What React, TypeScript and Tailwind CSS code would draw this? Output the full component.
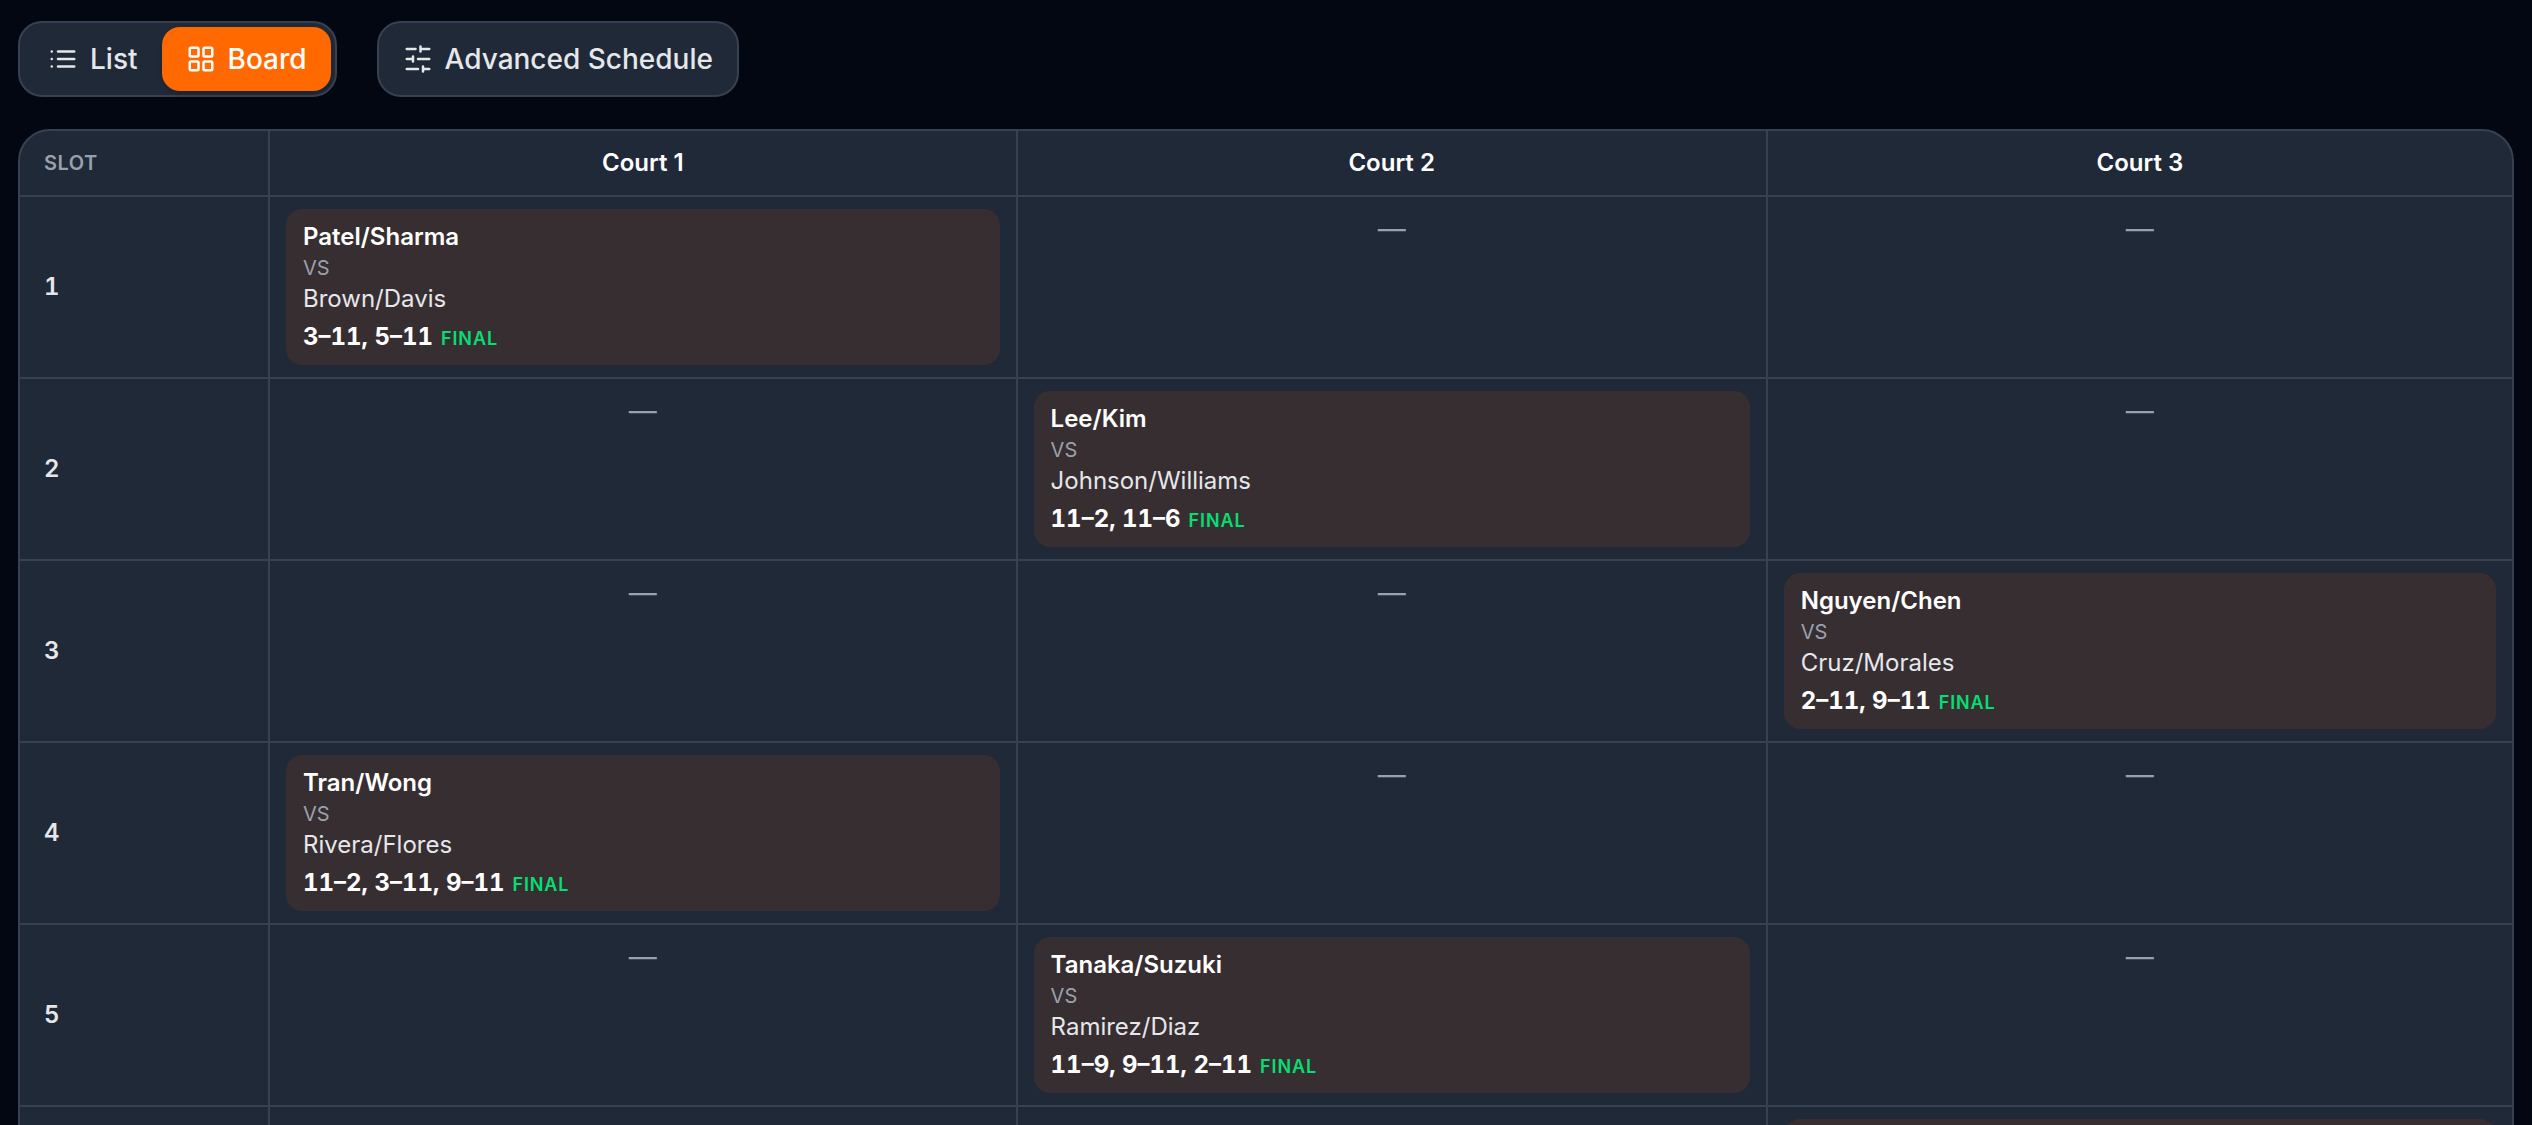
import type { ReactNode } from 'react';
import { useState } from 'react';

type Match = { court: number; home: string; away: string; score: string };

const courts = ['Court 1', 'Court 2', 'Court 3'];

const slots: Match[] = [
  { court: 0, home: 'Patel/Sharma', away: 'Brown/Davis', score: '3–11, 5–11' },
  { court: 1, home: 'Lee/Kim', away: 'Johnson/Williams', score: '11–2, 11–6' },
  { court: 2, home: 'Nguyen/Chen', away: 'Cruz/Morales', score: '2–11, 9–11' },
  { court: 0, home: 'Tran/Wong', away: 'Rivera/Flores', score: '11–2, 3–11, 9–11' },
  { court: 1, home: 'Tanaka/Suzuki', away: 'Ramirez/Diaz', score: '11–9, 9–11, 2–11' },
  { court: 2, home: '', away: '', score: '' },
];

function Icon({ children }: { children: ReactNode }) {
  return (
    <svg
      viewBox="0 0 24 24"
      className="size-[30px] shrink-0"
      fill="none"
      stroke="currentColor"
      strokeWidth="2"
      strokeLinecap="round"
      strokeLinejoin="round"
      aria-hidden="true"
    >
      {children}
    </svg>
  );
}

function ListIcon() {
  return (
    <Icon>
      <path d="M8 6h13M8 12h13M8 18h13M3 6h.01M3 12h.01M3 18h.01" />
    </Icon>
  );
}

function BoardIcon() {
  return (
    <Icon>
      <rect x="3" y="3" width="7" height="7" rx="1" />
      <rect x="14" y="3" width="7" height="7" rx="1" />
      <rect x="14" y="14" width="7" height="7" rx="1" />
      <rect x="3" y="14" width="7" height="7" rx="1" />
    </Icon>
  );
}

function SlidersIcon() {
  return (
    <Icon>
      <path d="M21 4h-7M10 4H3M21 12h-9M8 12H3M21 20h-5M12 20H3M14 2v4M8 10v4M16 18v4" />
    </Icon>
  );
}

function MatchCard({ match }: { match: Match }) {
  return (
    <div className="h-[156px] rounded-2xl bg-[#372e31] px-[17px] py-3 text-2xl leading-[31px]">
      {match.home && (
        <>
          <div className="font-semibold text-white">{match.home}</div>
          <div className="h-[31px] text-xl leading-8 text-gray-400">VS</div>
          <div className="text-gray-200">{match.away}</div>
          <div className="mt-2 flex items-baseline gap-2 leading-[30px]">
            <span className="font-bold text-white tabular-nums">{match.score}</span>
            <span className="text-lg leading-[30px] font-semibold tracking-wider text-[#05df72]">FINAL</span>
          </div>
        </>
      )}
    </div>
  );
}

export default function App() {
  const [view, setView] = useState<'list' | 'board'>('board');
  const on = 'bg-[#ff6900] text-white shadow-md';
  const off = 'text-gray-200';
  const tab = 'flex h-16 items-center gap-3 rounded-[18px] px-6';

  return (
    <div className="h-screen overflow-hidden bg-[#030712] px-[18px] pt-[21px] font-['Inter',sans-serif]">
      <div className="flex gap-10 text-[28px] leading-10 font-medium">
        <div className="flex rounded-3xl border-2 border-[#374151] bg-[#1f2937] p-1">
          <button type="button" className={`${tab} ${view === 'list' ? on : off}`} onClick={() => setView('list')}>
            <ListIcon />
            List
          </button>
          <button type="button" className={`${tab} ${view === 'board' ? on : off}`} onClick={() => setView('board')}>
            <BoardIcon />
            Board
          </button>
        </div>
        <button
          type="button"
          className="flex items-center gap-3 rounded-3xl border-2 border-[#374151] bg-[#1f2937] px-6 text-gray-200"
        >
          <SlidersIcon />
          Advanced Schedule
        </button>
      </div>

      <div className="mt-8 overflow-hidden rounded-[32px] border-2 border-[#374151] bg-[#1f2937]">
        <table className="w-full table-fixed border-separate border-spacing-0">
          <colgroup>
            <col className="w-[250px]" />
            <col className="w-[30%]" />
            <col className="w-[30.1%]" />
            <col />
          </colgroup>
          <thead>
            <tr>
              <th
                scope="col"
                className="h-[66px] border-r-2 border-b-2 border-[#374151] px-6 text-left text-xl font-semibold tracking-wide text-gray-400"
              >
                SLOT
              </th>
              {courts.map((court) => (
                <th
                  key={court}
                  scope="col"
                  className="border-r-2 border-b-2 border-[#374151] text-2xl font-semibold text-white last:border-r-0"
                >
                  {court}
                </th>
              ))}
            </tr>
          </thead>
          <tbody>
            {slots.map((match, row) => (
              <tr key={row}>
                <th
                  scope="row"
                  className="border-r-2 border-b-2 border-[#374151] px-6 text-left text-2xl font-semibold text-gray-200 tabular-nums"
                >
                  {match.home && row + 1}
                </th>
                {courts.map((court, col) => (
                  <td
                    key={court}
                    className="border-r-2 border-b-2 border-[#374151] px-4 py-3 align-top last:border-r-0"
                  >
                    {match.court === col && <MatchCard match={match} />}
                    {match.court !== col && match.home && (
                      <div className="text-center text-[28px] leading-10 text-gray-400">—</div>
                    )}
                  </td>
                ))}
              </tr>
            ))}
          </tbody>
        </table>
      </div>
    </div>
  );
}
